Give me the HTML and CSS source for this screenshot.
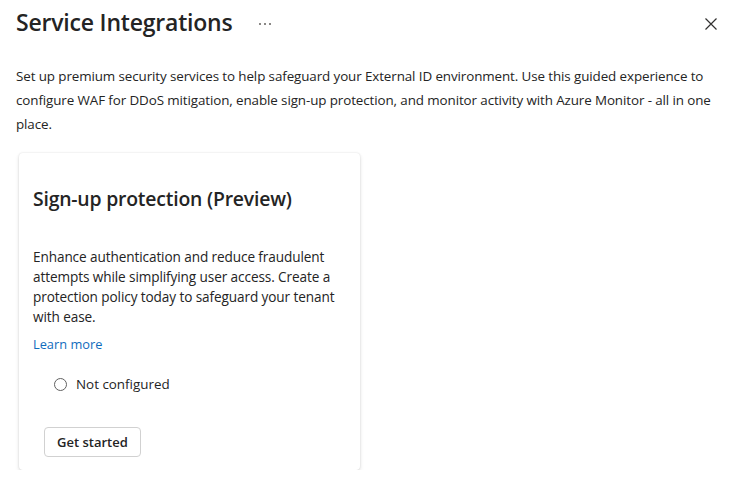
FILE: index.html
```html
<!DOCTYPE html>
<html lang="en">
<head>
<meta charset="utf-8">
<title>Service Integrations</title>
<link rel="stylesheet" href="styles.css">
</head>
<body>
<div class="page">
  <header class="header">
    <h1 class="title">Service Integrations</h1>
    <button class="more" aria-label="More actions">
      <svg width="12" height="4" viewBox="0 0 12 4"><rect x="0" y="1" width="2" height="2" fill="#8a8886"/><rect x="5" y="1" width="2" height="2" fill="#8a8886"/><rect x="10" y="1" width="2" height="2" fill="#8a8886"/></svg>
    </button>
    <div class="spacer"></div>
    <button class="close" aria-label="Close">
      <svg width="12" height="12" viewBox="0 0 12 12"><path d="M0.5 0.5 L11.5 11.5 M11.5 0.5 L0.5 11.5" stroke="#323130" stroke-width="1.2" fill="none"/></svg>
    </button>
  </header>
  <p class="desc">Set up premium security services to help safeguard your External ID environment. Use this guided experience to configure WAF for DDoS mitigation, enable sign-up protection, and monitor activity with Azure Monitor - all in one place.</p>
  <div class="card">
    <h2 class="card-title">Sign-up protection (Preview)</h2>
    <p class="card-text">Enhance authentication and reduce fraudulent attempts while simplifying user access. Create a protection policy today to safeguard your tenant with ease.</p>
    <a class="link" href="#">Learn more</a>
    <div class="status">
      <span class="radio"></span>
      <span class="status-text">Not configured</span>
    </div>
    <button class="btn">Get started</button>
  </div>
</div>
</body>
</html>
```
FILE: styles.css
```css
* { box-sizing: border-box; }
html, body { margin: 0; padding: 0; background: #ffffff; }
body {
  font-family: "Open Sans", "Noto Sans", sans-serif;
  color: #242424;
  font-size: 14px;
}
.page { padding: 0 16px; }
.header {
  display: flex;
  align-items: center;
  height: 46px;
}
.title {
  margin: 0;
  font-size: 23px;
  font-weight: 600;
  letter-spacing: -0.2px;
  line-height: 30px;
  color: #242424;
  margin-top: -2px;
}
.more {
  border: 0; background: none; padding: 0;
  margin-left: 26px;
  display: flex;
  margin-top: 2px;
}
.spacer { flex: 1; }
.close {
  border: 0; background: none; padding: 0;
  display: flex;
  margin-right: 7px;
  margin-top: 1px;
}
.desc {
  margin: 18px -14px 0 0;
  font-size: 13.4px;
  line-height: 24px;
  letter-spacing: -0.1px;
  color: #242424;
}
.card {
  margin: 17px 0 0 3px;
  width: 341px;
  height: 317px;
  border-radius: 4px;
  background: #fff;
  box-shadow: 0 0 2px rgba(0,0,0,0.12), 0 2px 4px rgba(0,0,0,0.12);
  padding: 32px 14px 0 14px;
  display: flex;
  flex-direction: column;
  align-items: flex-start;
}
.card-title {
  margin: 0;
  font-size: 19.4px;
  font-weight: 600;
  line-height: 28px;
  letter-spacing: -0.2px;
  color: #242424;
}
.card-text {
  margin: 34px 0 0 0;
  font-size: 13.6px;
  line-height: 20px;
  letter-spacing: -0.1px;
}
.link {
  margin-top: 7px;
  color: #0f6cbd;
  text-decoration: none;
  font-size: 12.8px;
  line-height: 20px;
}
.status {
  display: flex;
  align-items: center;
  gap: 9px;
  margin: 20px 0 0 21px;
  line-height: 20px;
}
.radio {
  width: 13px; height: 13px;
  border: 1px solid #616161;
  border-radius: 50%;
}
.status-text { font-size: 13.4px; }
.btn {
  margin: 33px 0 0 11px;
  height: 30px;
  padding: 0 12px;
  border: 1px solid #d1d1d1;
  border-radius: 4px;
  background: #fff;
  font-family: inherit;
  font-size: 13px;
  font-weight: 600;
  color: #242424;
}
```
